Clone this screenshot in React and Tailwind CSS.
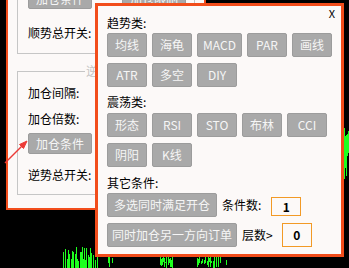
const rnd = (i) => {
  const s = Math.sin(i * 12.9898 + 3.1) * 43758.5453;
  return s - Math.floor(s);
};

// price spikes peeking out from behind the windows
const buildChart = () => {
  const segs = [];
  for (let x = 63; x <= 97; x++) {
    if (rnd(x) < 0.2) continue;
    segs.push([x, 247 + rnd(x + 50) * 15, 268]);
  }
  const clusters = [
    [108, 112],
    [160, 172],
    [196, 228],
  ];
  clusters.forEach(([a, b]) => {
    for (let x = a; x <= b; x++) {
      if (rnd(x) < 0.35) continue;
      segs.push([x, 254 + rnd(x + 7) * 8, 268 - rnd(x + 9) * 6]);
    }
  });
  for (let x = 342; x <= 349; x++) {
    segs.push([x, 126 + rnd(x) * 10, 150 + rnd(x + 3) * 35]);
  }
  return segs.map(([x, y1, y2]) => `M${x + 0.5} ${y1.toFixed(0)}V${y2.toFixed(0)}`).join("");
};

const Btn = ({ children, w = "w-[40px]" }) => (
  <div
    className={`${w} h-[24px] shrink-0 flex items-center justify-center rounded-[2px] border border-[#9c9c9c] bg-[#a9a9a9] text-[12px] leading-none text-[#f6f6f6]`}
  >
    {children}
  </div>
);

const PanelBtn = ({ children }) => (
  <div className="w-[64px] h-[21px] flex items-center justify-center rounded-[2px] border border-[#9c9c9c] bg-[#a9a9a9] text-[12px] leading-none text-[#f6f6f6]">
    {children}
  </div>
);

const Label = ({ children, className = "" }) => (
  <p className={`h-[16px] text-[12px] leading-[16px] text-black ${className}`}>{children}</p>
);

const NumBox = ({ value, h }) => (
  <div
    className={`w-[30px] ${h} flex items-center justify-center border border-[#f29a26] text-[12px] font-bold text-black`}
  >
    {value}
  </div>
);

export default function App() {
  return (
    <div className="relative w-[349px] h-[268px] overflow-hidden bg-black [font-family:'Noto_Sans_CJK_SC','Noto_Sans',sans-serif]">
      <svg className="absolute inset-0" width="349" height="268">
        <path d={buildChart()} stroke="#1eff1e" strokeWidth="1" shapeRendering="crispEdges" />
      </svg>

      {/* settings window behind */}
      <div className="absolute left-[6px] top-[-40px] w-[200px] h-[250px] border-2 border-[#f24d1b] bg-[#fcf9f8] pl-[9px] pt-[13px]">
        <div className="w-[178px] border border-[#c6c6c6] pl-[10px] pt-[12px] pb-[12px]">
          <div className="flex gap-[30px]">
            <PanelBtn>加仓条件</PanelBtn>
            <PanelBtn>加仓限制</PanelBtn>
          </div>
          <Label className="mt-[16px]">顺势总开关:</Label>
        </div>

        <div className="relative mt-[17px] w-[178px] border border-[#c6c6c6] pl-[10px] pb-[11px]">
          <span className="absolute left-[67px] top-[-9px] bg-[#fcf9f8] px-[1px] text-[12px] leading-[16px] text-[#c4c4c4]">
            逆势加仓
          </span>
          <Label className="mt-[13px]">加仓间隔:</Label>
          <Label className="mt-[10px]">加仓倍数:</Label>
          <div className="mt-[6px]">
            <PanelBtn>加仓条件</PanelBtn>
          </div>
          <Label className="mt-[13px]">逆势总开关:</Label>
        </div>
      </div>

      {/* annotation arrow */}
      <svg className="absolute left-0 top-0" width="40" height="200">
        <path d="M5 163L25 143" stroke="#ec3a36" strokeWidth="1.5" />
        <path d="M27 141L19.5 144.5L23.5 148.5Z" fill="#ec3a36" stroke="#ec3a36" strokeWidth="1" />
      </svg>

      {/* condition picker popup */}
      <div className="absolute left-[95px] top-[3px] w-[249px] h-[254px] border-[3px] border-[#f24d1b] bg-[#fcf9f8] pl-[9px] pt-[9px]">
        <span className="absolute right-[6px] top-[1px] text-[11px] leading-[12px] text-black">X</span>

        <Label>趋势类:</Label>
        <div className="mt-[2px] flex flex-col gap-[6px]">
          <div className="flex gap-[5px]">
            <Btn>均线</Btn>
            <Btn>海龟</Btn>
            <Btn w="w-[45px]">MACD</Btn>
            <Btn>PAR</Btn>
            <Btn>画线</Btn>
          </div>
          <div className="flex gap-[5px]">
            <Btn>ATR</Btn>
            <Btn>多空</Btn>
            <Btn>DIY</Btn>
          </div>
        </div>

        <Label className="mt-[7px]">震荡类:</Label>
        <div className="mt-[3px] flex flex-col gap-[6px]">
          <div className="flex gap-[5px]">
            <Btn>形态</Btn>
            <Btn>RSI</Btn>
            <Btn>STO</Btn>
            <Btn>布林</Btn>
            <Btn>CCI</Btn>
          </div>
          <div className="flex gap-[5px]">
            <Btn>阴阳</Btn>
            <Btn>K线</Btn>
          </div>
        </div>

        <Label className="mt-[8px]">其它条件:</Label>
        <div className="mt-[2px] flex flex-col gap-[6px]">
          <div className="flex items-center">
            <Btn w="w-[110px]">多选同时满足开仓</Btn>
            <span className="ml-[5px] text-[12px] text-black">条件数:</span>
            <div className="ml-[10px] self-end mb-[1px]">
              <NumBox value="1" h="h-[19px]" />
            </div>
          </div>
          <div className="flex items-center">
            <Btn w="w-[130px]">同时加仓另一方向订单</Btn>
            <span className="ml-[5px] text-[12px] text-black">层数&gt;</span>
            <div className="ml-[9px]">
              <NumBox value="0" h="h-[24px]" />
            </div>
          </div>
        </div>
      </div>
    </div>
  );
}
